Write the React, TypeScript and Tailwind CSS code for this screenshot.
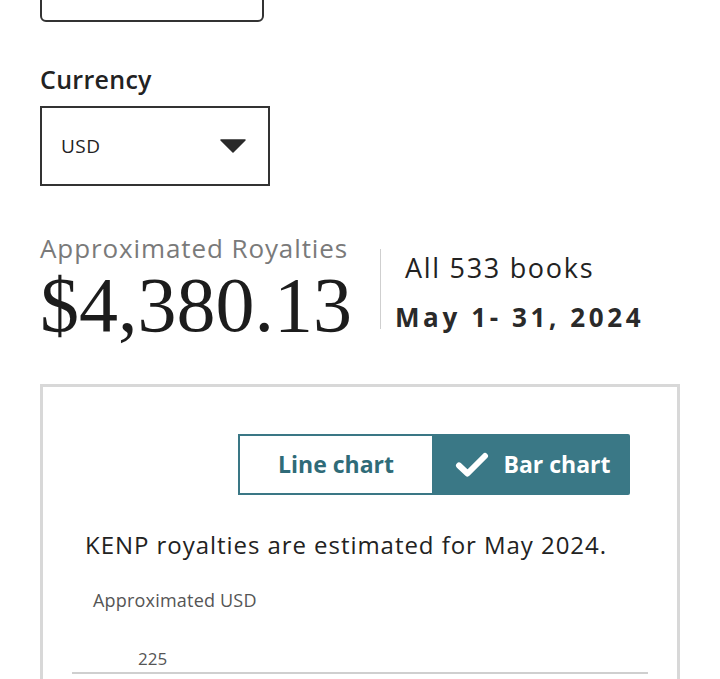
// Royalties summary — currency picker, headline total and chart card
export default function App() {
  return (
    <div className="min-h-[679px] overflow-hidden bg-white pl-[40px] font-['Open_Sans',sans-serif] text-[#222]">
      {/* previous select, cut off by the top of the screen */}
      <div className="-mt-[38px] h-[60px] w-[224px] rounded-[6px] border-2 border-[#333]" />

      <h2 className="mt-[42px] text-[25px] font-semibold leading-[30px] tracking-[0.3px] text-[#222]">Currency</h2>
      <div className="mt-[12px] flex h-[80px] w-[230px] items-center justify-between border-2 border-[#333] pl-[19px] pr-[22px]">
        <span className="text-[19px] tracking-[0.5px] text-[#222]">USD</span>
        <svg className="h-[14px] w-[26px]" viewBox="0 0 26 14">
          <path d="M1 1h24L13 13z" fill="#2a2a2a" stroke="#2a2a2a" strokeWidth={1.5} strokeLinejoin="round" />
        </svg>
      </div>

      <div className="mt-[48px] flex items-start">
        <div className="w-[312px]">
          <p className="whitespace-nowrap text-[26px] leading-[28px] tracking-[0.9px] text-[#7a7a7a]">Approximated Royalties</p>
          <p className="mt-[4px] whitespace-nowrap font-['Liberation_Serif',serif] text-[78px] leading-[78px] text-[#1c1c1c]">
            $4,380.13
          </p>
        </div>
        <div className="ml-[28px] mt-[15px] h-[80px] w-px bg-[#cfcfcf]" />
        <div className="ml-[14px] mt-[17px]">
          <p className="pl-[10px] text-[27px] leading-[34px] tracking-[1.7px] text-[#222]">All 533 books</p>
          <p className="mt-[17px] whitespace-nowrap text-[26px] font-bold leading-[30px] tracking-[3.6px] text-[#2a2a2a]">May 1- 31, 2024</p>
        </div>
      </div>

      <div className="mt-[40px] w-[640px] border-[3px] border-[#d8d8d8] pb-[20px]">
        <div className="flex justify-end pr-[47px] pt-[47px]">
          <button className="flex h-[61px] w-[196px] items-center justify-center border-2 border-[#3a7785] bg-white text-[23px] font-bold text-[#2f6b78]">
            Line chart
          </button>
          <button className="flex h-[61px] w-[196px] items-center justify-center gap-[14px] rounded-r-[2px] bg-[#3a7886] pl-[2px] text-[23px] font-bold text-white">
            <svg className="h-[26px] w-[34px]" viewBox="0 0 34 26">
              <path d="M4 13.5l8.5 8L30 4" fill="none" stroke="white" strokeWidth={6} strokeLinecap="round" strokeLinejoin="round" />
            </svg>
            Bar chart
          </button>
        </div>

        <p className="mt-[35px] whitespace-nowrap pl-[42px] text-[24px] leading-[30px] tracking-[0.95px] text-[#222]">
          KENP royalties are estimated for May 2024.
        </p>
        <p className="mt-[29px] pl-[50px] text-[18px] leading-[22px] tracking-[0.2px] text-[#555]">Approximated USD</p>
        <div className="mx-[29px] mt-[37px] border-b-2 border-[#cfcfcf] pb-[2px] pl-[66px] text-[17px] leading-[22px] text-[#555]">225</div>
      </div>
    </div>
  );
}
